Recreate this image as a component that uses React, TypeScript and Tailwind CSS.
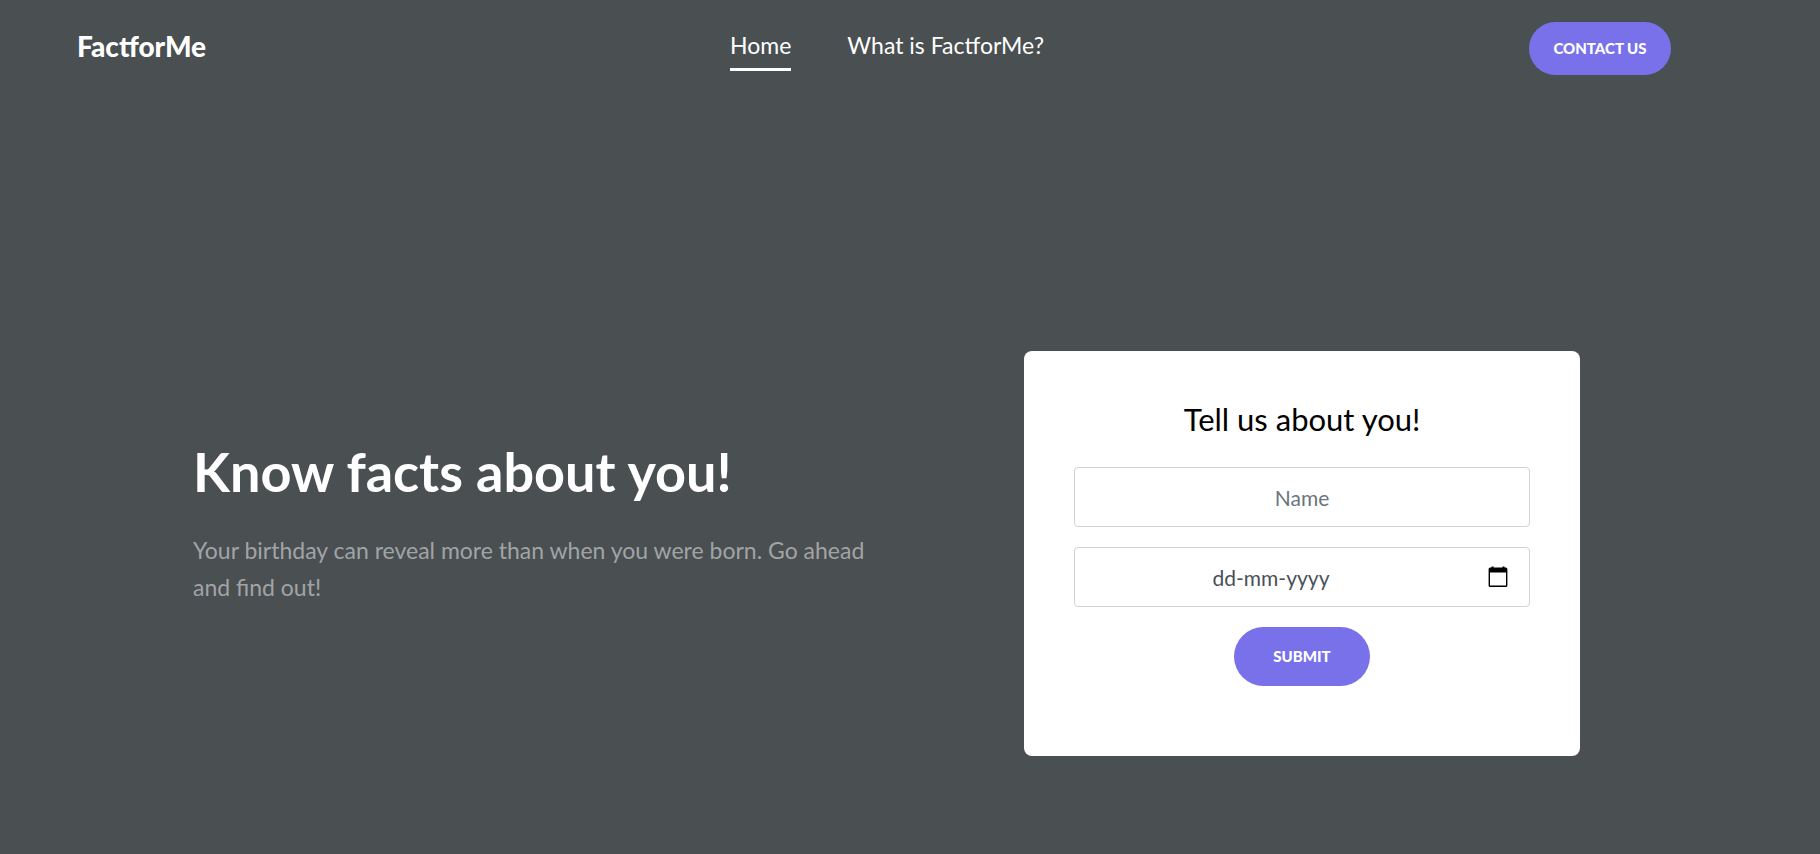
import { useState } from "react";

function CalendarIcon() {
  return (
    <svg width="22" height="22" viewBox="0 0 22 22" aria-hidden="true">
      <path
        fill="#000"
        fillRule="evenodd"
        d="M4.5 0.5h2v1h9v-1h2v1h1.3a1.6 1.6 0 0 1 1.6 1.6v16.3a1.6 1.6 0 0 1-1.6 1.6H3.2a1.6 1.6 0 0 1-1.6-1.6V3.1a1.6 1.6 0 0 1 1.6-1.6h1.3zM3 6.5v13h16v-13z"
      />
    </svg>
  );
}

export default function App() {
  const [name, setName] = useState("");
  const [birthday, setBirthday] = useState("");

  return (
    <div className="flex min-h-screen flex-col bg-[#4a4f52] font-[Lato,sans-serif] text-white">
      <header className="grid grid-cols-[1fr_auto_1fr] items-start pt-[22px] pr-[123px] pl-[77px]">
        <a href="#home" className="pt-2 text-[28px] leading-8 font-black">
          FactforMe
        </a>
        <nav className="flex gap-14 text-[23px]">
          <a href="#home" className="border-b-[3px] border-white pt-2 pb-2 leading-[30px]">
            Home
          </a>
          <a href="#about" className="pt-2 pb-2 leading-[30px]">
            What is FactforMe?
          </a>
        </nav>
        <a
          href="#contact"
          className="mr-[26px] flex h-[53px] w-[142px] items-center justify-center justify-self-end rounded-full bg-[#7971ea] text-[15px] font-black"
        >
          CONTACT US
        </a>
      </header>

      <main className="mt-[276px] grid grid-cols-[831fr_556fr] items-center pr-60 pl-[193px]">
        <section className="max-w-[700px] pr-4 pb-[60px]">
          <h1 className="mb-[30px] text-[54px] leading-[60px] font-bold">Know facts about you!</h1>
          <p className="text-[23px] leading-[37px] text-[#a1a4a6]">
            Your birthday can reveal more than when you were born. Go ahead and find out!
          </p>
        </section>

        <form
          className="flex flex-col items-center rounded-lg bg-white px-[50px] pt-[50px] pb-[70px]"
          onSubmit={(event) => event.preventDefault()}
        >
          <h2 className="mb-[30px] text-[31px] leading-9 text-black">Tell us about you!</h2>
          <input
            type="text"
            aria-label="Name"
            placeholder="Name"
            value={name}
            onChange={(event) => setName(event.target.value)}
            className="mb-5 h-[60px] w-full rounded border border-[#ced4da] px-3 text-center text-[21px] text-[#495057] placeholder:text-[#6c757d]"
          />
          <div className="mb-5 flex h-[60px] w-full items-center rounded border border-[#ced4da] pr-5 pl-3">
            <input
              type="text"
              aria-label="Birthday"
              placeholder="dd-mm-yyyy"
              value={birthday}
              onChange={(event) => setBirthday(event.target.value)}
              className="mr-8 h-full min-w-0 flex-1 text-center text-[21px] text-[#495057] placeholder:text-[#495057]"
            />
            <button type="button" aria-label="Open calendar">
              <CalendarIcon />
            </button>
          </div>
          <button type="submit" className="h-[59px] w-[136px] rounded-full bg-[#7971ea] text-[15px] font-black">
            SUBMIT
          </button>
        </form>
      </main>
    </div>
  );
}
